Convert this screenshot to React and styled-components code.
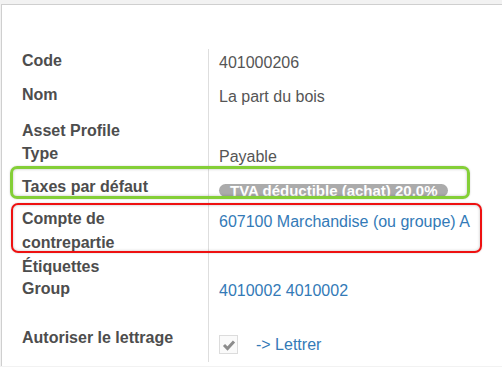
import React from 'react'
import styled, { createGlobalStyle } from 'styled-components'

const Global = createGlobalStyle`
  html, body {
    margin: 0;
    padding: 0;
    background: #f2f2f2;
    overflow: hidden;
  }
  body {
    font-family: "Liberation Sans", Arial, sans-serif;
  }
`

const rows = [
  { label: 'Code', value: '401000206', h: 34 },
  { label: 'Nom', value: 'La part du bois', h: 36 },
  { label: 'Asset Profile', h: 23 },
  { label: 'Type', value: 'Payable', h: 33, top: 3 },
  { label: 'Taxes par défaut', badge: 'TVA déductible (achat) 20,0%', h: 32 },
  { label: <>Compte de<br />contrepartie</>, value: '607100 Marchandise (ou groupe) A', link: true, h: 48, top: 3 },
  { label: 'Étiquettes', h: 22 },
  { label: 'Group', value: '4010002 4010002', link: true, h: 49 },
  { label: 'Autoriser le lettrage', check: true, h: 36 },
]

const App = () => {
  return (
    <>
      <Global />
      <Sheet>
        <Table>
          {rows.map((r, i) => (
            <Row key={i} $h={r.h}>
              <Label>{r.label}</Label>
              <Value $top={r.top}>
                {r.value && <Text $link={r.link}>{r.value}</Text>}
                {r.badge && <Badge>{r.badge}</Badge>}
                {r.check && (
                  <Lettrage>
                    <Check>
                      <svg width="14" height="12" viewBox="0 0 14 12">
                        <polyline points="2,6 5.5,9.5 12,2.5" fill="none" stroke="#8c8c8c" strokeWidth="3" />
                      </svg>
                    </Check>
                    <Text $link>-&gt; Lettrer</Text>
                  </Lettrage>
                )}
              </Value>
            </Row>
          ))}
        </Table>
        <Mark $color="#84cf37" $w={3} $left={8} $top={161} $width={460} $height={33} />
        <Mark $color="#ee1111" $w={2} $left={9} $top={198} $width={471} $height={50} />
      </Sheet>
    </>
  )
}

const Sheet = styled.div`
  position: relative;
  margin: 4px 0 0 1px;
  background: #fff;
  border-top: 1px solid #cfcfcf;
  border-left: 1px solid #cfcfcf;
  height: 362px;
  box-sizing: border-box;
  padding: 44px 0 0 20px;
`

const Table = styled.div`
  display: flex;
  flex-direction: column;
`

const Row = styled.div`
  display: grid;
  grid-template-columns: 187px 1fr;
  height: ${p => p.$h}px;
`

const Label = styled.div`
  border-right: 1px solid #dedede;
  font-size: 16px;
  line-height: 24px;
  font-weight: bold;
  color: #4d4d4d;
`

const Value = styled.div`
  display: flex;
  align-items: flex-start;
  padding: ${p => p.$top ?? 2}px 0 0 10px;
  font-size: 16px;
  line-height: 24px;
`

const Text = styled.span`
  color: ${p => (p.$link ? '#337ab7' : '#555')};
  white-space: nowrap;
`

const Badge = styled.span`
  margin-top: 7px;
  height: 13px;
  padding: 0 10px 0 11px;
  border-radius: 7px;
  background: #ababab;
  color: #fff;
  font-size: 15px;
  font-weight: bold;
  line-height: 14px;
  white-space: nowrap;
`

const Lettrage = styled.div`
  display: flex;
  align-items: flex-start;
  gap: 18px;
  margin-top: -2px;
  span {
    margin-top: 7px;
  }
`

const Check = styled.div`
  margin-top: 9px;
  width: 17px;
  height: 17px;
  border: 1px solid #dcdcdc;
  background: #fafafa;
  display: flex;
  align-items: center;
  justify-content: center;
`

const Mark = styled.div`
  position: absolute;
  left: ${p => p.$left}px;
  top: ${p => p.$top}px;
  width: ${p => p.$width}px;
  height: ${p => p.$height}px;
  box-sizing: border-box;
  border: ${p => p.$w}px solid ${p => p.$color};
  border-radius: 7px;
  box-shadow: inset 0 0 3px rgba(0, 0, 0, 0.25), 0 0 2px rgba(0, 0, 0, 0.2);
  pointer-events: none;
`

export default App
